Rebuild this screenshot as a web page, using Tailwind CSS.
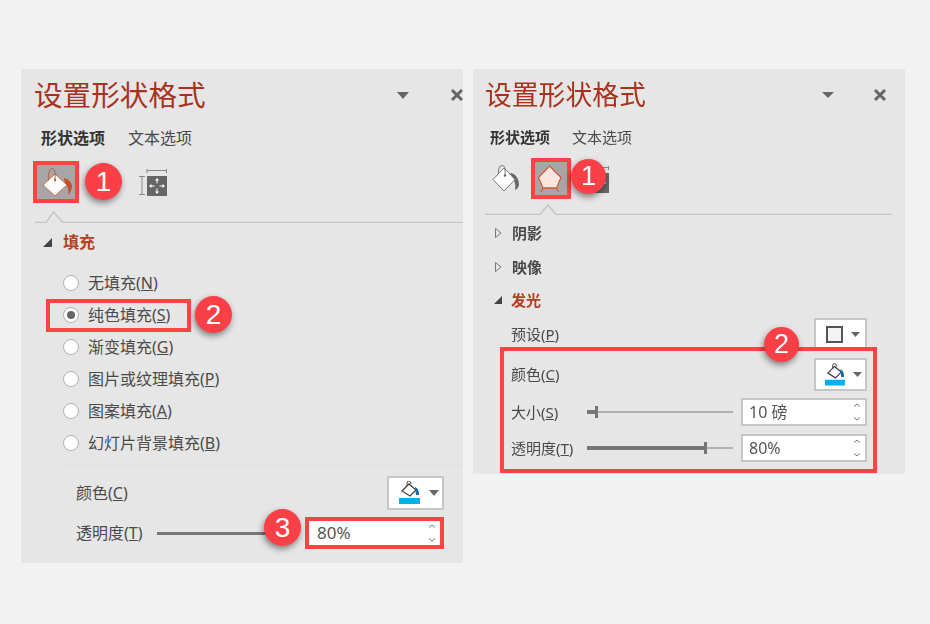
<!DOCTYPE html>
<html lang="zh-CN">
<head>
<meta charset="UTF-8" />
<title>设置形状格式</title>
<script src="https://cdn.jsdelivr.net/npm/@tailwindcss/browser@4"></script>
</head>
<body class="w-[930px] h-[624px] overflow-hidden bg-[#f2f2f2] [font-family:'Noto_Sans','Noto_Sans_CJK_SC',sans-serif] text-[#4a4a4a]">
<div class="flex items-start gap-[10px] pt-[69px] pl-[21px] blur-[0.3px]">

  <!-- left pane -->
  <section class="relative w-[442px] h-[494px] bg-[#e6e6e6] overflow-hidden shrink-0">
    <div class="h-[52px] flex items-center pl-[13px]">
      <h1 class="text-[28.6px] leading-none text-[#a8321c]">设置形状格式</h1>
      <svg class="ml-auto mr-[41px]" width="12" height="7" viewBox="0 0 12 7"><path d="M0 0H12L6 7Z" fill="#666"/></svg>
      <svg class="mr-[-1px]" width="14" height="14" viewBox="0 0 14 14"><path d="M2 2L12 12M12 2L2 12" stroke="#666" stroke-width="3"/></svg>
    </div>
    <div class="h-[34px] flex items-center pl-[20px] text-[16px] gap-[23px]">
      <span class="font-bold text-[#333]">形状选项</span><span>文本选项</span>
    </div>
    <div class="mt-[6px] h-[42px] flex items-center pl-[12px]">
      <div class="w-[46px] h-[42px] border-[4px] border-[#ff4343] bg-[#a6a6a6] flex items-center justify-center">
        <svg width="34" height="30" viewBox="0 0 34 30"><path d="M25 11C30 12 33 16 33 20C32 24 31 26 29 28C30 23 29 19 26 17Z" fill="#c0522b"/><path d="M16 7L28 18L16 29L4 18Z" fill="#fff" stroke="#c0522b" stroke-width="0.800"/><path d="M9.500 13C9 7 10.500 1.500 13 1.500C15.500 1.500 16.500 5 16 12" fill="none" stroke="#c0522b" stroke-width="0.900"/><circle cx="16" cy="13" r="1.200" fill="#c0522b"/></svg>
      </div>
      <svg class="ml-[60px]" width="28" height="28" viewBox="0 0 28 28"><path d="M8 2.500H28M8 1V5M27.500 1V5M0 8.500H6M0 26.500H6M3 8.500V26.500" fill="none" stroke="#888" stroke-width="1"/><rect x="8" y="8" width="20" height="20" fill="#666"/><path d="M18 11V15.500M18 20.500V25M11 18H15.500M20.500 18H25" stroke="#fff" stroke-width="1"/><path d="M18 10L16 12.500H20ZM18 26L16 23.500H20ZM10 18L12.500 16V20ZM26 18L23.500 16V20Z" fill="#fff"/></svg>
    </div>
    <svg class="mt-[8px] block" width="442" height="12" viewBox="0 0 442 12"><path d="M14 11.500H25L32.500 1L42 11.500H442" fill="none" stroke="#c6c6c6" stroke-width="1.500"/></svg>
    <div class="h-[38px] flex items-center pl-[22px] gap-[11px]">
      <svg width="9" height="9" viewBox="0 0 9 9"><path d="M9 0V9H0Z" fill="#444"/></svg>
      <span class="text-[16px] font-bold text-[#b0401f]">填充</span>
    </div>
    <div class="mt-[6px] flex flex-col pl-[42px] text-[16px]">
      <label class="h-[32px] flex items-center gap-[9px]"><i class="w-[16px] h-[16px] rounded-full bg-white border border-[#b0b0b0]"></i>无填充(<span class="underline -mx-[9px]">N</span>)</label>
      <label class="h-[32px] flex items-center gap-[9px]"><i class="w-[16px] h-[16px] rounded-full bg-white border border-[#b0b0b0] flex items-center justify-center"><b class="w-[8px] h-[8px] rounded-full bg-[#666]"></b></i>纯色填充(<span class="underline -mx-[9px]">S</span>)</label>
      <label class="h-[32px] flex items-center gap-[9px]"><i class="w-[16px] h-[16px] rounded-full bg-white border border-[#b0b0b0]"></i>渐变填充(<span class="underline -mx-[9px]">G</span>)</label>
      <label class="h-[32px] flex items-center gap-[9px]"><i class="w-[16px] h-[16px] rounded-full bg-white border border-[#b0b0b0]"></i>图片或纹理填充(<span class="underline -mx-[9px]">P</span>)</label>
      <label class="h-[32px] flex items-center gap-[9px]"><i class="w-[16px] h-[16px] rounded-full bg-white border border-[#b0b0b0]"></i>图案填充(<span class="underline -mx-[9px]">A</span>)</label>
      <label class="h-[32px] flex items-center gap-[9px]"><i class="w-[16px] h-[16px] rounded-full bg-white border border-[#b0b0b0]"></i>幻灯片背景填充(<span class="underline -mx-[9px]">B</span>)</label>
    </div>
    <div class="mt-[6px] ml-[44px] h-px bg-[#e0e0e0]"></div>
    <div class="mt-[10px] h-[34px] flex items-center pl-[55px] pr-[19px] text-[16px]">
      <span>颜色(<span class="underline">C</span>)</span>
      <div class="ml-auto w-[57px] h-[34px] bg-white border-2 border-[#c6c6c6] flex items-center pl-[10px] gap-[8px]">
        <svg width="22" height="24" viewBox="0 0 22 24"><path d="M3 10L10 3L17 9L11 15Z" fill="#fff" stroke="#444" stroke-width="1.300"/><path d="M8 5V2Q8 0 10 0Q12 0 12 3" fill="none" stroke="#444"/><path d="M16 6Q20 7 20 14H17Z" fill="#1769aa"/><rect x="0" y="17" width="21" height="6" fill="#00b0f0"/></svg>
        <svg width="10" height="6" viewBox="0 0 10 6"><path d="M0 0H10L5 6Z" fill="#666"/></svg>
      </div>
    </div>
    <div class="mt-[7px] h-[32px] flex items-center pl-[55px] pr-[19px] text-[16px]">
      <span class="w-[81px]">透明度(<span class="underline">T</span>)</span>
      <div class="w-[113px] h-[3px] bg-[#777]"></div>
      <div class="ml-auto w-[139px] h-[32px] bg-white border-[4px] border-[#ff4343] flex items-center pl-[8px] pr-[2px]">
        <span class="text-[#555] text-[17px]">80%</span>
        <svg class="ml-auto" width="12" height="20" viewBox="0 0 12 20"><path d="M3 4.500L6 2L9 4.500M3 15.500L6 18L9 15.500" fill="none" stroke="#777" stroke-width="1"/></svg>
      </div>
    </div>

    <!-- callouts -->
    <div class="absolute left-[25px] top-[230px] w-[145px] h-[33px] border-[4px] border-[#ff4343]"></div>
    <div class="absolute left-[64px] top-[94px] w-[37px] h-[37px] rounded-full bg-[#fa3f47] text-white text-[28px] leading-none flex items-center justify-center shadow-[-1px_3px_6px_rgba(0,0,0,0.45)] [font-family:'Liberation_Sans',sans-serif]">1</div>
    <div class="absolute left-[174px] top-[227px] w-[37px] h-[37px] rounded-full bg-[#fa3f47] text-white text-[28px] leading-none flex items-center justify-center shadow-[-1px_3px_6px_rgba(0,0,0,0.45)] [font-family:'Liberation_Sans',sans-serif]">2</div>
    <div class="absolute left-[243px] top-[440px] w-[37px] h-[37px] rounded-full bg-[#fa3f47] text-white text-[28px] leading-none flex items-center justify-center shadow-[-1px_3px_6px_rgba(0,0,0,0.45)] [font-family:'Liberation_Sans',sans-serif]">3</div>
  </section>

  <!-- right pane -->
  <section class="relative w-[432px] h-[405px] bg-[#e6e6e6] overflow-hidden shrink-0">
    <div class="h-[52px] flex items-center pl-[12px]">
      <h1 class="text-[26.8px] leading-none text-[#a8321c]">设置形状格式</h1>
      <svg class="ml-auto mr-[39px]" width="12" height="6" viewBox="0 0 12 6"><path d="M0 0H12L6 6Z" fill="#666"/></svg>
      <svg class="mr-[18px]" width="14" height="14" viewBox="0 0 14 14"><path d="M2 2L12 12M12 2L2 12" stroke="#666" stroke-width="3"/></svg>
    </div>
    <div class="h-[32px] flex items-center pl-[17px] text-[15px] gap-[22px]">
      <span class="font-bold text-[#333]">形状选项</span><span>文本选项</span>
    </div>
    <div class="mt-[5px] h-[41px] flex items-center pl-[18px]">
      <svg width="30" height="30" viewBox="0 0 30 30"><path d="M19 9C24 9 28 14 28 21C27 24 26 25 24 26C25 21 24 18 22 15Z" fill="#666"/><path d="M13 4L24 15.500L13 27L2 15.500Z" fill="#fff" stroke="#666" stroke-width="0.900"/><path d="M7.500 10C7 5 8.500 1.500 11 1.500C13.500 1.500 14.500 4 14 11" fill="none" stroke="#666" stroke-width="0.900"/><circle cx="14" cy="11.500" r="1.200" fill="#666"/></svg>
      <div class="ml-[10px] w-[40px] h-[41px] border-[4px] border-[#ff4343] bg-[#a6a6a6] flex items-center justify-center">
        <svg class="-ml-[2px]" width="26" height="28" viewBox="0 0 26 28"><path d="M12.500 1L24 12.500L19.500 23H6L1.500 12.500Z" fill="#fbe5df" stroke="#d0583a" stroke-width="1.200"/><path d="M4 27L6 23H19.500L21.500 27" fill="none" stroke="#d0583a" stroke-width="1.200"/></svg>
      </div>
      <svg class="ml-[10px]" width="28" height="28" viewBox="0 0 28 28"><path d="M8 2.500H28M27.500 1V5" fill="none" stroke="#888"/><rect x="8" y="8" width="20" height="20" fill="#666"/><path d="M18 11V15.500M18 20.500V25M20.500 18H25" stroke="#fff" stroke-width="1"/></svg>
    </div>
    <svg class="mt-[5px] block" width="432" height="11" viewBox="0 0 432 11"><path d="M12 10.500H67L75 1L83 10.500H419" fill="none" stroke="#c6c6c6" stroke-width="1.500"/></svg>
    <div class="mt-px h-[34px] flex items-center pl-[22px] gap-[10px] text-[15px] font-bold">
      <svg width="7" height="10" viewBox="0 0 7 10"><path d="M0.500 0.500L6 5L0.500 9.500Z" fill="#e6e6e6" stroke="#777"/></svg><span>阴影</span>
    </div>
    <div class="h-[34px] flex items-center pl-[22px] gap-[10px] text-[15px] font-bold">
      <svg width="7" height="10" viewBox="0 0 7 10"><path d="M0.500 0.500L6 5L0.500 9.500Z" fill="#e6e6e6" stroke="#777"/></svg><span>映像</span>
    </div>
    <div class="h-[34px] pb-[2px] flex items-center pl-[21px] gap-[9px] text-[15px] font-bold">
      <svg width="8" height="8" viewBox="0 0 8 8"><path d="M8 0V8H0Z" fill="#444"/></svg><span class="text-[#b0401f]">发光</span>
    </div>
    <div class="h-[33px] flex items-center pl-[38px] pr-[38px] text-[15px]">
      <span>预设(<span class="underline">P</span>)</span>
      <div class="ml-auto w-[53px] h-[33px] bg-white border-2 border-[#c6c6c6] flex items-center pl-[10px] gap-[8px]">
        <i class="w-[17px] h-[17px] border-2 border-[#555] bg-[#f4f4f4]"></i>
        <svg width="9" height="5" viewBox="0 0 9 5"><path d="M0 0H9L4.500 5Z" fill="#666"/></svg>
      </div>
    </div>
    <div class="mt-[7px] h-[33px] flex items-center pl-[38px] pr-[38px] text-[15px]">
      <span>颜色(<span class="underline">C</span>)</span>
      <div class="ml-auto w-[53px] h-[33px] bg-white border-2 border-[#c6c6c6] flex items-center pl-[9px] gap-[8px]">
        <svg width="20" height="24" viewBox="0 0 21 24"><path d="M3 10L10 3L17 9L11 15Z" fill="#fff" stroke="#444" stroke-width="1.300"/><path d="M8 5V2Q8 0 10 0Q12 0 12 3" fill="none" stroke="#444"/><path d="M16 6Q20 7 20 14H17Z" fill="#1769aa"/><rect x="0" y="17" width="21" height="6" fill="#00b0f0"/></svg>
        <svg width="9" height="5" viewBox="0 0 9 5"><path d="M0 0H9L4.500 5Z" fill="#666"/></svg>
      </div>
    </div>
    <div class="mt-[7px] h-[28px] flex items-center pl-[38px] pr-[38px] text-[15px]">
      <span class="w-[76px]">大小(<span class="underline">S</span>)</span>
      <div class="relative w-[146px] h-[2px] bg-[#b0b0b0]">
        <div class="absolute left-0 top-[-1px] w-[10px] h-[4px] bg-[#777]"></div>
        <div class="absolute left-[8px] top-[-5px] w-[3px] h-[12px] bg-[#777]"></div>
      </div>
      <div class="ml-auto w-[126px] h-[28px] bg-white border-2 border-[#c6c6c6] flex items-center pl-[6px] pr-[2px] text-[#555] text-[16px]">
        <span>10 磅</span>
        <svg class="ml-auto" width="12" height="20" viewBox="0 0 12 20"><path d="M3 4.500L6 2L9 4.500M3 15.500L6 18L9 15.500" fill="none" stroke="#777" stroke-width="1"/></svg>
      </div>
    </div>
    <div class="mt-[8px] h-[28px] flex items-center pl-[38px] pr-[38px] text-[15px]">
      <span class="w-[76px]">透明度(<span class="underline">T</span>)</span>
      <div class="relative w-[146px] h-[2px] bg-[#b0b0b0]">
        <div class="absolute left-0 top-[-1px] w-[118px] h-[4px] bg-[#777]"></div>
        <div class="absolute left-[117px] top-[-5px] w-[3px] h-[12px] bg-[#777]"></div>
      </div>
      <div class="ml-auto w-[126px] h-[28px] bg-white border-2 border-[#c6c6c6] flex items-center pl-[6px] pr-[2px] text-[#555] text-[16px]">
        <span>80%</span>
        <svg class="ml-auto" width="12" height="20" viewBox="0 0 12 20"><path d="M3 4.500L6 2L9 4.500M3 15.500L6 18L9 15.500" fill="none" stroke="#777" stroke-width="1"/></svg>
      </div>
    </div>

    <!-- callouts -->
    <div class="absolute left-[27px] top-[278px] w-[377px] h-[126px] border-[4px] border-[#ff4343]"></div>
    <div class="absolute left-[98px] top-[90px] w-[35px] h-[35px] rounded-full bg-[#fa3f47] text-white text-[27px] leading-none flex items-center justify-center shadow-[-1px_3px_6px_rgba(0,0,0,0.45)] [font-family:'Liberation_Sans',sans-serif]">1</div>
    <div class="absolute left-[291px] top-[258px] w-[35px] h-[35px] rounded-full bg-[#fa3f47] text-white text-[27px] leading-none flex items-center justify-center shadow-[-1px_3px_6px_rgba(0,0,0,0.45)] [font-family:'Liberation_Sans',sans-serif]">2</div>
  </section>
</div>
</body>
</html>
